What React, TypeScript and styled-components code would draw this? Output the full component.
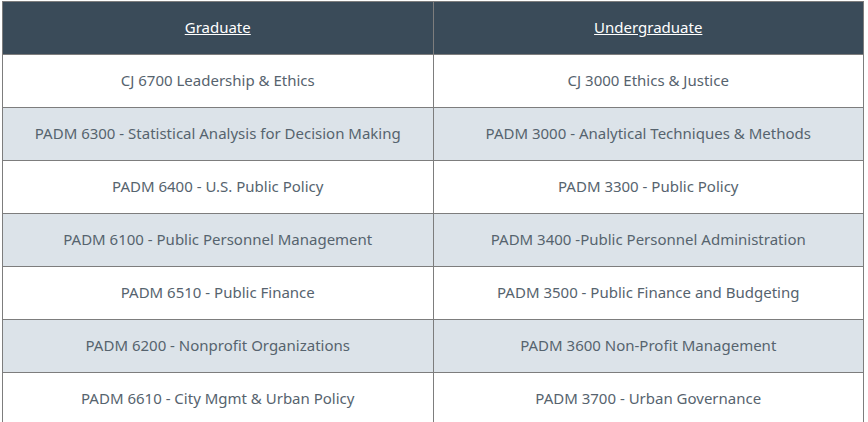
import React from 'react';
import styled, { createGlobalStyle } from 'styled-components';

const GlobalStyle = createGlobalStyle`
  html, body {
    margin: 0;
    padding: 0;
    background: #ffffff;
  }
`;

const Wrapper = styled.div`
  padding: 1px 4px 0 2px;
`;

const Table = styled.table`
  width: 100%;
  border-collapse: collapse;
  table-layout: fixed;
  font-family: 'Noto Sans', 'Open Sans', sans-serif;
  font-size: 15px;
`;

const HeadCell = styled.th`
  background: #3a4b59;
  color: #ffffff;
  font-weight: 400;
  height: 50px;
  padding: 0 8px 2px;
  border: 1px solid #7d7d7d;
  text-align: center;

  & a {
    color: inherit;
    text-decoration: underline;
  }
`;

const Row = styled.tr<{ $striped: boolean }>`
  background: ${(p) => (p.$striped ? '#dce3e9' : '#ffffff')};
`;

const Cell = styled.td`
  height: 50px;
  padding: 0 8px 2px;
  border: 1px solid #7d7d7d;
  color: #56636e;
  text-align: center;
`;

const courses: [string, string][] = [
  ['CJ 6700 Leadership & Ethics', 'CJ 3000 Ethics & Justice'],
  ['PADM 6300 - Statistical Analysis for Decision Making', 'PADM 3000 - Analytical Techniques & Methods'],
  ['PADM 6400 - U.S. Public Policy', 'PADM 3300 - Public Policy'],
  ['PADM 6100 - Public Personnel Management', 'PADM 3400 -Public Personnel Administration'],
  ['PADM 6510 - Public Finance', 'PADM 3500 - Public Finance and Budgeting'],
  ['PADM 6200 - Nonprofit Organizations', 'PADM 3600 Non-Profit Management'],
  ['PADM 6610 - City Mgmt & Urban Policy', 'PADM 3700 - Urban Governance'],
];

export default function App() {
  return (
    <Wrapper>
      <GlobalStyle />
      <Table>
        <thead>
          <tr>
            <HeadCell><a>Graduate</a></HeadCell>
            <HeadCell><a>Undergraduate</a></HeadCell>
          </tr>
        </thead>
        <tbody>
          {courses.map(([grad, undergrad], i) => (
            <Row key={grad} $striped={i % 2 === 1}>
              <Cell>{grad}</Cell>
              <Cell>{undergrad}</Cell>
            </Row>
          ))}
        </tbody>
      </Table>
    </Wrapper>
  );
}
